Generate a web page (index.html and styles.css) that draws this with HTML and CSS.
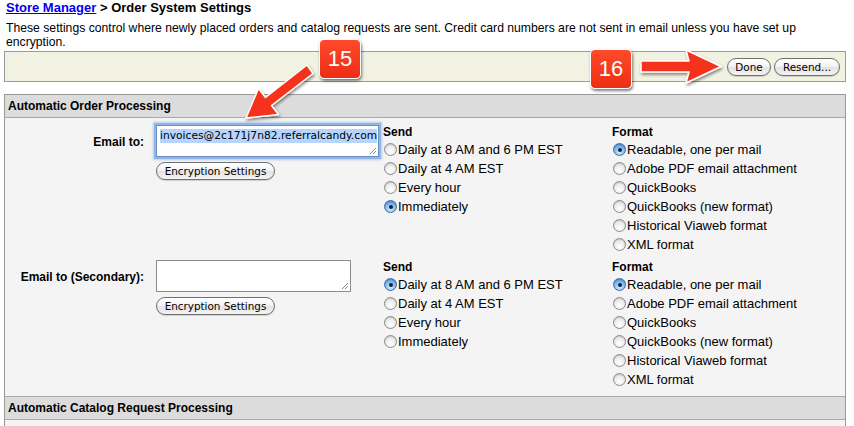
FILE: index.html
```html
<!DOCTYPE html>
<html>
<head>
<meta charset="utf-8">
<link rel="stylesheet" href="styles.css">
</head>
<body>
<div class="page">
  <h1 class="title"><a href="#">Store Manager</a> &gt; Order System Settings</h1>
  <p class="desc">These settings control where newly placed orders and catalog requests are sent. Credit card numbers are not sent in email unless you have set up<br>encryption.</p>
  <div class="actionbar">
    <button class="btn btn-done">Done</button>
    <button class="btn btn-resend">Resend...</button>
  </div>
  <div class="section">
    <div class="section-head">Automatic Order Processing</div>
    <div class="section-body">
      <div class="email-row">
        <div class="field-label">Email to:</div>
        <div class="field-input">
          <div class="textbox textbox-primary"><span class="selected">invoices@2c171j7n82.referralcandy.com</span><span class="grip"></span></div>
          <button class="btn btn-enc">Encryption Settings</button>
        </div>
        <div class="opt-col">
          <div class="opt-head">Send</div>
          <div class="opt"><span class="radio"></span>Daily at 8 AM and 6 PM EST</div>
          <div class="opt"><span class="radio"></span>Daily at 4 AM EST</div>
          <div class="opt"><span class="radio"></span>Every hour</div>
          <div class="opt"><span class="radio checked"></span>Immediately</div>
        </div>
        <div class="opt-col">
          <div class="opt-head">Format</div>
          <div class="opt"><span class="radio checked"></span>Readable, one per mail</div>
          <div class="opt"><span class="radio"></span>Adobe PDF email attachment</div>
          <div class="opt"><span class="radio"></span>QuickBooks</div>
          <div class="opt"><span class="radio"></span>QuickBooks (new format)</div>
          <div class="opt"><span class="radio"></span>Historical Viaweb format</div>
          <div class="opt"><span class="radio"></span>XML format</div>
        </div>
      </div>
      <div class="email-row">
        <div class="field-label">Email to (Secondary):</div>
        <div class="field-input">
          <div class="textbox textbox-secondary"><span class="grip"></span></div>
          <button class="btn btn-enc">Encryption Settings</button>
        </div>
        <div class="opt-col">
          <div class="opt-head">Send</div>
          <div class="opt"><span class="radio checked"></span>Daily at 8 AM and 6 PM EST</div>
          <div class="opt"><span class="radio"></span>Daily at 4 AM EST</div>
          <div class="opt"><span class="radio"></span>Every hour</div>
          <div class="opt"><span class="radio"></span>Immediately</div>
        </div>
        <div class="opt-col">
          <div class="opt-head">Format</div>
          <div class="opt"><span class="radio checked"></span>Readable, one per mail</div>
          <div class="opt"><span class="radio"></span>Adobe PDF email attachment</div>
          <div class="opt"><span class="radio"></span>QuickBooks</div>
          <div class="opt"><span class="radio"></span>QuickBooks (new format)</div>
          <div class="opt"><span class="radio"></span>Historical Viaweb format</div>
          <div class="opt"><span class="radio"></span>XML format</div>
        </div>
      </div>
    </div>
    <div class="section-head section-head-next">Automatic Catalog Request Processing</div>
    <div class="section-body section-body-rest"></div>
  </div>
</div>

<svg class="arrows" width="854" height="426" viewBox="0 0 854 426">
  <defs>
    <filter id="sh" x="-20%" y="-20%" width="140%" height="140%">
      <feDropShadow dx="1" dy="2" stdDeviation="1.6" flood-color="#000" flood-opacity="0.45"/>
    </filter>
  </defs>
  <polygon filter="url(#sh)" fill="#f5321c" stroke="#fff" stroke-width="1.5" stroke-linejoin="round"
    points="313,73.5 271.5,105.5 278.5,114.5 246,118 258.5,88.5 265.5,97.5 307,65"/>
  <polygon filter="url(#sh)" fill="#f5321c" stroke="#fff" stroke-width="1.5" stroke-linejoin="round"
    points="641,61 689,61 686,50 721,66.5 686,83 689,72 641,72"/>
</svg>
<div class="badge badge-15">15</div>
<div class="badge badge-16">16</div>
</body>
</html>
```

FILE: styles.css
```css
html, body {
  margin: 0;
  padding: 0;
  background: #fff;
}
body {
  font-family: "Liberation Sans", Arial, sans-serif;
  color: #000;
  width: 854px;
  height: 426px;
  overflow: hidden;
  position: relative;
}
.page {
  padding: 0 8px 0 4px;
}
.title {
  margin: 0 0 0 2px;
  font-size: 13px;
  line-height: 16px;
  font-weight: bold;
}
.title a {
  color: #0000ee;
  text-decoration: underline;
}
.desc {
  margin: 5px 0 2px 2px;
  font-size: 12.2px;
  line-height: 14px;
}
.actionbar {
  height: 29px;
  border: 1px solid #9a9a9a;
  background: #f2f2e2;
  display: flex;
  justify-content: flex-end;
  align-items: center;
  gap: 3px;
  padding: 0 5px;
  margin-top: 2px;
}
.btn {
  font-family: "DejaVu Sans", sans-serif;
  font-size: 10.4px;
  height: 18px;
  line-height: 16px;
  padding: 0 8px;
  border: 1px solid #6f6f6f;
  border-radius: 9px;
  background: linear-gradient(#ffffff, #f2f2f2 50%, #e2e2e2 51%, #f4f4f4);
  color: #000;
  box-shadow: 0 1px 1px rgba(0,0,0,0.15);
}
.btn-done { width: 44px; padding: 0; }
.btn-resend { width: 66px; padding: 0; }
.section {
  margin-top: 12px;
  border: 1px solid #9a9a9a;
  border-bottom: none;
}
.section-head {
  height: 22px;
  line-height: 22px;
  background: #dcdcdc;
  border-bottom: 1px solid #a8a8a8;
  font-size: 12px;
  font-weight: bold;
  padding-left: 3px;
}
.section-head-next {
  border-top: 1px solid #a8a8a8;
}
.section-body {
  background: #f4f4f4;
  padding: 6px 0 7px;
  display: flex;
  flex-direction: column;
  gap: 5px;
}
.section-body-rest {
  height: 20px;
  padding: 0;
}
.email-row {
  display: grid;
  grid-template-columns: 151px 227px 229px 1fr;
  font-size: 12px;
}
.field-label {
  text-align: right;
  padding-right: 12px;
  padding-top: 10px;
  line-height: 16px;
  font-weight: bold;
}
.field-input {
  padding-top: 1px;
  display: flex;
  flex-direction: column;
  align-items: flex-start;
  gap: 5px;
}
.textbox {
  position: relative;
  height: 30px;
  background: #fff;
  border: 1px solid #8c8c8c;
  box-sizing: content-box;
  font-family: "DejaVu Sans", sans-serif;
  font-size: 10.7px;
  line-height: 14px;
  padding: 0;
}
.textbox-primary {
  width: 221px;
  border-color: #6b8fc2;
  box-shadow: 0 0 0 2px #8fb6e6, 0 0 2px 3px rgba(120,165,225,0.5);
}
.textbox-secondary {
  width: 193px;
}
.selected {
  display: inline-block;
  margin: 3px 0 0 3px;
  background: #b5d5ff;
  white-space: nowrap;
}
.grip {
  position: absolute;
  right: 2px;
  bottom: 2px;
  width: 6px;
  height: 6px;
  background: linear-gradient(135deg, transparent 45%, #888 46%, #888 52%, transparent 53%, transparent 70%, #888 71%, #888 77%, transparent 78%);
}
.btn-enc {
  width: 119px;
  padding: 0;
}
.opt-col {
  display: flex;
  flex-direction: column;
}
.opt-head {
  font-weight: bold;
  line-height: 16px;
  height: 16px;
}
.opt {
  height: 19px;
  display: flex;
  align-items: center;
  white-space: nowrap;
  font-size: 13px;
}
.radio {
  width: 11px;
  height: 11px;
  border: 1px solid #8a8a8a;
  border-radius: 50%;
  margin: 0 1px 0 1px;
  background: radial-gradient(circle at 50% 70%, #ffffff, #e6e6e6 70%, #d2d2d2);
  box-shadow: inset 0 1px 1px rgba(0,0,0,0.12);
  position: relative;
  flex: none;
}
.radio.checked {
  border-color: #3d6ba6;
  background: radial-gradient(circle at 50% 75%, #d4ecff, #7bb6ee 55%, #3e86d4);
}
.radio.checked::after {
  content: "";
  position: absolute;
  left: 3.5px;
  top: 3.5px;
  width: 4px;
  height: 4px;
  border-radius: 50%;
  background: #14233a;
}
.arrows {
  position: absolute;
  left: 0;
  top: 0;
  pointer-events: none;
}
.badge {
  position: absolute;
  width: 40px;
  height: 38px;
  line-height: 38px;
  text-align: center;
  color: #fff;
  font-size: 22px;
  font-family: "Liberation Sans", Arial, sans-serif;
  background: linear-gradient(#ff4a2a, #ee2d14);
  border: 1px solid #fff;
  border-radius: 5px;
  box-shadow: 1px 2px 3px rgba(0,0,0,0.5);
}
.badge-15 {
  left: 319px;
  top: 39px;
}
.badge-16 {
  left: 590px;
  top: 49px;
}
```
